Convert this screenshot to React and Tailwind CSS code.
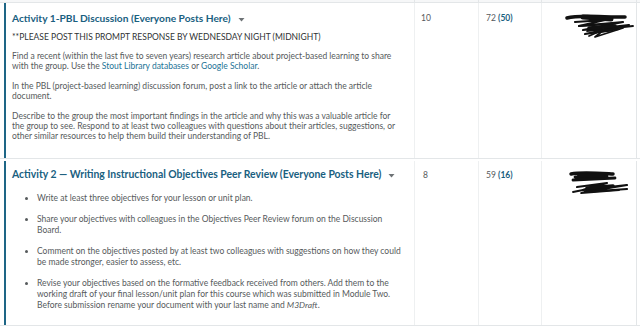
import React from 'react'

const Scribble = ({ variant }) => (
  <svg width="70" height="26" viewBox="0 0 70 26" className="block">
    {variant === 1 ? (
      <g fill="none" stroke="#111" strokeLinecap="round" strokeLinejoin="round">
        <path d="M2 5 C12 2, 30 3, 46 4 L60 4" strokeWidth="3.5" />
        <path d="M18 4 L46 6" strokeWidth="5" />
        <path d="M10 9 L40 7 L14 13 L58 9 L18 17 L64 12 L20 21 L54 16" strokeWidth="2.2" />
        <path d="M14 13 L44 11 L22 18 L68 13" strokeWidth="1.8" />
        <path d="M24 23 L40 16 L30 24 L58 15" strokeWidth="1.8" />
        <path d="M24 15 L50 13" strokeWidth="3.5" />
        <path d="M30 19 L46 17" strokeWidth="3" />
      </g>
    ) : (
      <g fill="none" stroke="#111" strokeLinecap="round" strokeLinejoin="round">
        <path d="M4 4 C14 2, 28 3, 46 4" strokeWidth="3.5" />
        <path d="M8 7 L40 6 L6 10 L48 8" strokeWidth="2.8" />
        <path d="M12 5 L36 6" strokeWidth="4" />
        <path d="M10 17 L40 13 L16 20 L60 15 L18 22 L60 19" strokeWidth="2.2" />
        <path d="M6 22 L36 16 L14 23 L52 20" strokeWidth="1.8" />
        <path d="M20 18 L46 16" strokeWidth="3.5" />
      </g>
    )}
  </svg>
)

const Caret = () => (
  <svg width="7" height="5" viewBox="0 0 7 5" className="inline-block ml-[7px] align-middle">
    <path d="M0.5 1 L6.5 1 L3.5 4.5 Z" fill="#6e7376" />
  </svg>
)

export default function App() {
  return (
    <div
      className="w-[640px] h-[327px] bg-white overflow-hidden text-[#565a5c]"
      style={{ fontFamily: 'Lato, "Open Sans", sans-serif' }}
    >
      {/* header strip */}
      <div className="flex h-[3px] bg-[#f6f7f8] border-b border-[#e3e6e8]">
        <div className="w-[414px]" />
        <div className="w-[64px] border-l border-[#e3e6e8]" />
        <div className="w-[63px] border-l border-[#e3e6e8]" />
        <div className="w-[95px] border-l border-[#e3e6e8]" />
        <div className="flex-1 border-l border-[#e3e6e8]" />
      </div>

      {/* Activity 1 */}
      <div className="flex border-b border-[#e3e6e8] pl-[4px]">
        <div className="w-[410px] border-l-2 border-[#1e6686] pl-[6px] pt-[8px] pb-[17px]">
          <div className="text-[10.2px] font-bold text-[#19607f] leading-[15px] whitespace-nowrap">
            Activity 1-PBL Discussion (Everyone Posts Here)
            <Caret />
          </div>
          <p className="mt-[6px] text-[8.5px] text-[#2f3234] leading-[11px] whitespace-nowrap">
            **PLEASE POST THIS PROMPT RESPONSE BY WEDNESDAY NIGHT (MIDNIGHT)
          </p>
          <p className="mt-[8px] text-[8.5px] leading-[10px] whitespace-nowrap">
            Find a recent (within the last five to seven years) research article about project-based learning to share
            <br />
            with the group. Use the <span className="text-[#237396]">Stout Library databases</span> or{' '}
            <span className="text-[#237396]">Google Scholar</span>.
          </p>
          <p className="mt-[10px] text-[8.5px] leading-[10px] whitespace-nowrap">
            In the PBL (project-based learning) discussion forum, post a link to the article or attach the article
            <br />
            document.
          </p>
          <p className="mt-[10px] text-[8.5px] leading-[10px] whitespace-nowrap">
            Describe to the group the most important findings in the article and why this was a valuable article for
            <br />
            the group to see. Respond to at least two colleagues with questions about their articles, suggestions, or
            <br />
            other similar resources to help them build their understanding of PBL.
          </p>
        </div>
        <div className="w-[64px] border-l border-[#eef0f1] pl-[6px] pt-[9px] text-[8.5px] leading-[12px]">10</div>
        <div className="w-[63px] border-l border-[#eef0f1] pl-[7px] pt-[9px] text-[8.5px] leading-[12px]">
          72 <span className="font-bold text-[#19607f]">(50)</span>
        </div>
        <div className="w-[95px] border-l border-[#eef0f1] pl-[23px] pt-[10px]">
          <Scribble variant={1} />
        </div>
        <div className="flex-1 border-l border-[#e3e6e8]" />
      </div>

      {/* Activity 2 */}
      <div className="flex border-b border-[#e3e6e8] pl-[4px] mt-[2px]">
        <div className="w-[410px] border-l-2 border-[#1e6686] pl-[6px] pt-[6px] pb-[14px]">
          <div className="text-[10.4px] font-bold text-[#19607f] leading-[15px] whitespace-nowrap">
            Activity 2 — Writing Instructional Objectives Peer Review (Everyone Posts Here)
            <Caret />
          </div>
          <ul className="mt-[11px] pl-[25px] list-disc text-[8.5px] leading-[11px] whitespace-nowrap flex flex-col gap-[10px]">
            <li>Write at least three objectives for your lesson or unit plan.</li>
            <li>
              Share your objectives with colleagues in the Objectives Peer Review forum on the Discussion
              <br />
              Board.
            </li>
            <li>
              Comment on the objectives posted by at least two colleagues with suggestions on how they could
              <br />
              be made stronger, easier to assess, etc.
            </li>
            <li>
              Revise your objectives based on the formative feedback received from others. Add them to the
              <br />
              working draft of your final lesson/unit plan for this course which was submitted in Module Two.
              <br />
              Before submission rename your document with your last name and <em>M3Draft</em>.
            </li>
          </ul>
        </div>
        <div className="w-[64px] border-l border-[#eef0f1] pl-[8px] pt-[8px] text-[8.5px] leading-[12px]">8</div>
        <div className="w-[63px] border-l border-[#eef0f1] pl-[7px] pt-[8px] text-[8.5px] leading-[12px]">
          59 <span className="font-bold text-[#19607f]">(16)</span>
        </div>
        <div className="w-[95px] border-l border-[#eef0f1] pl-[25px] pt-[9px]">
          <Scribble variant={2} />
        </div>
        <div className="flex-1 border-l border-[#e3e6e8]" />
      </div>
    </div>
  )
}
